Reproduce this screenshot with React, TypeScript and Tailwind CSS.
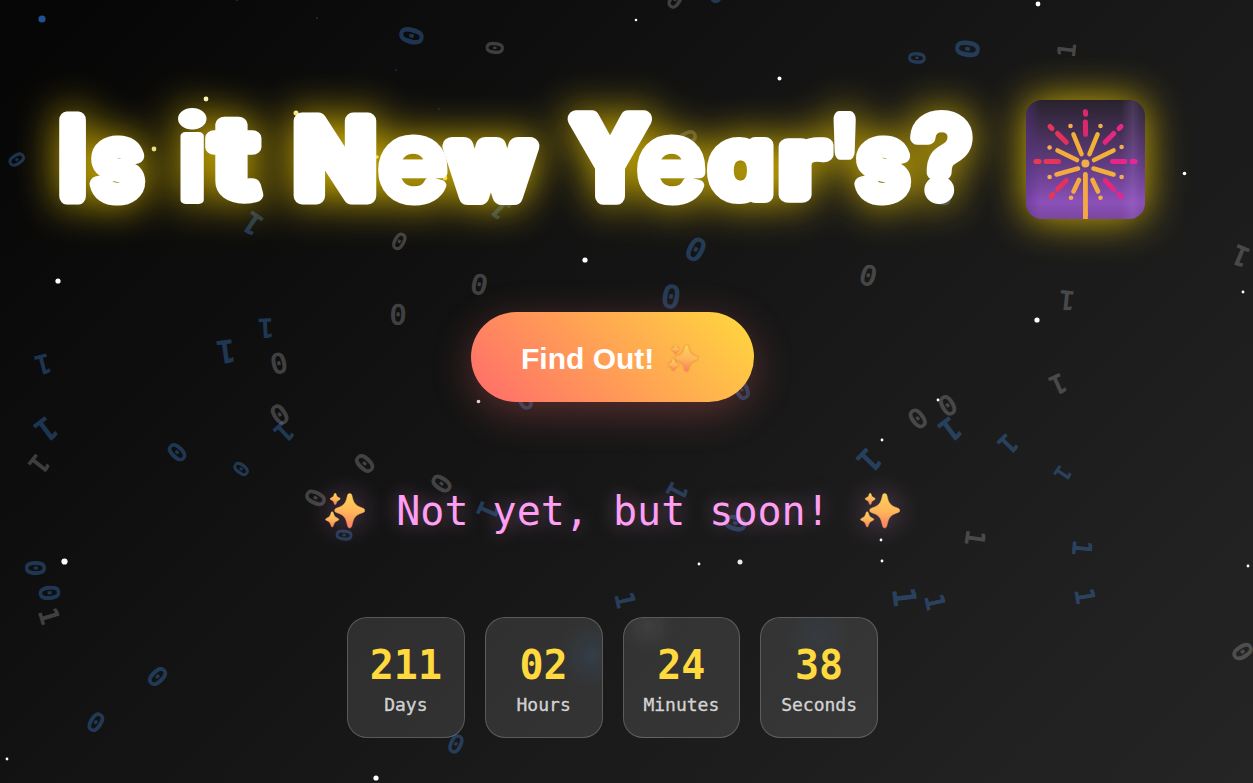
import React from "react";

type Digit = [ch: string, x: number, y: number, rot: number, size: number, tone: "b" | "g"];

const digits: Digit[] = [
  ["0", 412, 36, 105, 31, "b"], ["0", 494, 48, 95, 23, "g"], ["0", 675, 0, 30, 24, "g"], ["0", 717, -6, 20, 24, "b"],
  ["0", 916, 58, 94, 22, "b"], ["0", 968, 49, 98, 31, "b"], ["1", 1067, 50, -84, 25, "g"], ["0", 16, 160, 57, 22, "b"],
  ["1", 253, 223, 214, 30, "b"], ["1", 501, 208, 224, 28, "b"], ["0", 686, 139, 60, 27, "g"], ["0", 941, 199, 100, 22, "b"],
  ["0", 399, 242, 28, 23, "g"], ["0", 696, 249, 27, 31, "b"], ["0", 868, 276, 16, 27, "g"], ["0", 479, 285, 12, 27, "g"],
  ["0", 671, 296, 9, 31, "b"], ["0", 398, 315, 2, 27, "g"], ["1", 1241, 255, 203, 28, "g"], ["1", 1067, 300, 186, 27, "g"],
  ["1", 266, 328, 177, 27, "b"], ["1", 226, 351, 172, 32, "b"], ["1", 43, 364, 165, 27, "b"], ["0", 279, 364, -12, 27, "g"],
  ["0", 280, 415, -33, 27, "g"], ["1", 284, 432, 137, 27, "b"], ["1", 46, 429, 143, 32, "b"], ["1", 39, 464, 129, 27, "g"],
  ["0", 177, 452, -46, 26, "b"], ["0", 241, 469, -53, 21, "b"], ["0", 365, 464, -47, 27, "g"], ["0", 442, 484, -55, 27, "g"],
  ["0", 316, 498, -64, 27, "g"], ["0", 344, 535, 96, 21, "b"], ["1", 487, 510, 114, 28, "b"], ["1", 677, 491, 118, 27, "b"],
  ["0", 735, 523, 106, 29, "b"], ["0", 525, 400, -25, 27, "b"], ["0", 742, 390, -24, 27, "b"], ["1", 1058, 384, 156, 27, "g"],
  ["0", 918, 419, -37, 27, "g"], ["0", 948, 406, -30, 27, "g"], ["1", 950, 429, 143, 32, "b"], ["1", 869, 460, 134, 32, "b"],
  ["1", 1008, 444, 135, 27, "b"], ["1", 1062, 473, 124, 22, "b"], ["1", 975, 538, 98, 27, "g"], ["1", 1082, 548, 95, 27, "b"],
  ["1", 1085, 596, 81, 27, "b"], ["1", 904, 597, 83, 32, "b"], ["1", 935, 602, 78, 27, "b"], ["1", 625, 600, 77, 27, "b"],
  ["0", 35, 568, 90, 27, "b"], ["0", 49, 593, 84, 27, "b"], ["1", 49, 616, 73, 27, "g"], ["0", 157, 677, 46, 27, "b"],
  ["0", 96, 722, 31, 26, "b"], ["0", 456, 744, 25, 25, "b"], ["0", 1242, 652, 58, 27, "g"],
];

const stars: [x: number, y: number, r: number, fill?: string][] = [
  [42, 19, 3.6, "#1f5290"], [1038, 4, 2.4], [636, 20, 1.3], [779.5, 78.5, 2], [206, 99, 2.4, "#fff7cf"], [154, 149, 2.4, "#e5dcae"],
  [296, 113, 2.5, "#f7e8a8"], [377, 157, 1.8, "#ffe680"], [445, 178, 2.4, "#ffe680"], [1184.5, 173.5, 1.8], [585, 260, 2.6], [58, 281, 2.6],
  [1243, 292, 1.4], [1037, 320, 2.6], [478.5, 401.5, 1.8, "#e8dada"], [938, 400, 1.4], [882, 440, 1.4], [881, 540, 1.4],
  [882, 561, 1.4], [699, 564, 1.4], [740, 562, 2.5, "#eaeaea"], [64.5, 561.5, 3.1], [1248, 566, 1.4], [7, 759, 1.4], [376, 778, 2.6],
  [317, 18, 1, "#18304a"], [396, 70, 1, "#17304a"], [439, 109, 0.9, "#172b40"], [237, 0, 1, "#1b334a"],
];

function Backdrop() {
  return (
    <div className="pointer-events-none absolute inset-0 overflow-hidden" aria-hidden="true">
      <svg className="absolute inset-0 size-full">
        {stars.map(([x, y, r, fill]) => (
          <circle key={`${x}-${y}`} cx={x} cy={y} r={r} fill={fill ?? "#ffffff"} />
        ))}
      </svg>
      {digits.map(([ch, x, y, rot, size, tone], i) => (
        <span
          key={i}
          className={
            "absolute font-bold leading-none " +
            (ch === "0" ? "font-['Liberation_Mono',monospace] " : "font-['DejaVu_Sans_Mono',monospace] ") +
            (tone === "b" ? "text-[#4a9eff]/30" : "text-[#d0d0d0]/26")
          }
          style={{
            left: x,
            top: y,
            fontSize: size,
            transform:
              `translate(-50%,-50%) rotate(${rot}deg)` + (ch === "0" ? " translateY(0.08em) scale(1.08,1.17)" : ""),
          }}
        >
          {ch}
        </span>
      ))}
    </div>
  );
}

// Each letter is stretched to its own box: left, right, top, bottom, outline width, font weight.
type Glyph = [ch: string, left: number, right: number, top: number, bottom: number, outline: number, weight: number];
const words: Glyph[][] = [
  [["I", 58, 87, 112, 204, 16, 600], ["s", 89, 146, 135, 205, 15, 400]],
  [["i", 178, 207, 107, 204, 9, 400], ["t", 206, 263, 115, 204, 17, 500]],
  [["N", 293, 377, 112, 204, 17, 600], ["e", 378, 448, 135, 206, 11.5, 400], ["w", 442, 540, 136, 205, 19, 500]],
  [
    ["Y", 567, 653, 110, 204, 17, 600], ["e", 637, 706, 135, 206, 11.5, 400], ["a", 706, 768, 136, 205, 17, 400],
    ["r", 779, 833, 136, 204, 18, 500], ["'", 832, 857, 112, 159, 14, 600], ["s", 854, 912, 135, 205, 15, 400],
    ["?", 910, 973, 110, 204, 14.5, 400],
  ],
];
const ctx = document.createElement("canvas").getContext("2d")!;

function Letter({ glyph: [ch, left, right, top, bottom, outline, weight] }: { glyph: Glyph }) {
  ctx.font = `${weight} 105px Inter`;
  const m = ctx.measureText(ch);
  const sx = (right - left - outline) / (m.actualBoundingBoxRight + m.actualBoundingBoxLeft);
  const sy = (bottom - top - outline) / (m.actualBoundingBoxAscent + m.actualBoundingBoxDescent);
  const x = left + outline / 2 + m.actualBoundingBoxLeft * sx;
  const y = top + outline / 2 + m.actualBoundingBoxAscent * sy;
  return (
    <text
      transform={`translate(${x} ${y}) scale(${sx} ${sy})`}
      strokeWidth={outline}
      fontWeight={weight}
      className="[vector-effect:non-scaling-stroke]"
    >
      {ch}
    </text>
  );
}

function Title() {
  return (
    <h1 className="flex w-[1105px] items-center justify-between">
      <svg
        viewBox="40 80 950 150"
        className="h-[150px] w-[950px] overflow-visible font-['Inter',sans-serif] text-[105px] drop-shadow-[0_0_20px_rgba(255,215,0,0.82)] [font-feature-settings:'cv11']"
        fill="#fff"
        stroke="#fff"
        strokeLinejoin="round"
        strokeLinecap="round"
      >
        {words.map((word, i) => (
          <g key={i}>
            {word.map((glyph) => (
              <Letter key={glyph[1]} glyph={glyph} />
            ))}
          </g>
        ))}
      </svg>
      <Sparkler />
    </h1>
  );
}

function Sparkler() {
  return (
    <svg viewBox="0 0 119 119" className="mt-[9px] size-[119px] overflow-visible drop-shadow-[0_0_20px_rgba(255,215,0,0.82)]">
      <defs>
        <linearGradient id="night" x1="0" y1="0" x2="0" y2="1">
          <stop offset="0" stopColor="#28222d" />
          <stop offset="0.3" stopColor="#483159" />
          <stop offset="0.6" stopColor="#673f8b" />
          <stop offset="0.86" stopColor="#8b50b8" />
          <stop offset="1" stopColor="#7a479f" />
        </linearGradient>
        <linearGradient id="edge" x1="0" y1="0" x2="1" y2="0">
          <stop offset="0" stopColor="#56308a" stopOpacity="0.5" />
          <stop offset="0.12" stopColor="#56308a" stopOpacity="0" />
          <stop offset="0.8" stopColor="#b484df" stopOpacity="0" />
          <stop offset="0.9" stopColor="#b484df" stopOpacity="0.2" />
          <stop offset="1" stopColor="#70489a" stopOpacity="0.05" />
        </linearGradient>
        <linearGradient id="gold" gradientUnits="userSpaceOnUse" x1="30" y1="90" x2="90" y2="40">
          <stop offset="0" stopColor="#f6a546" />
          <stop offset="1" stopColor="#f0b52f" />
        </linearGradient>
        <linearGradient id="pink" gradientUnits="userSpaceOnUse" x1="8" y1="0" x2="111" y2="0">
          <stop offset="0" stopColor="#ee3b4f" />
          <stop offset="0.5" stopColor="#d9296a" />
          <stop offset="1" stopColor="#ee2498" />
        </linearGradient>
      </defs>
      <rect width="119" height="119" rx="16" fill="url(#night)" />
      <rect width="119" height="119" rx="16" fill="url(#edge)" />
      <g stroke="url(#pink)" strokeWidth="5" strokeLinecap="round">
        <path d="M59.4 11.8 59.6 14.2M59.4 22 59.6 34.4M10 61.4 13 61.6M20 61.4 32.5 61.6M86.5 61.4 99 61.6M106 61.4 109 61.6" />
        <path d="M24 26.5 26 28.5M31.5 33.5 40.3 42.3M93 28.5 95 26.5M79 42.3 87.8 33.5M25 96.5 27 94.5M31.5 89.3 40.3 80.5M93 94.5 95 96.5M79 80.5 87.8 89.3" />
      </g>
      <g stroke="url(#gold)" strokeWidth="4.6" strokeLinecap="round">
        <path d="M47.5 34.5 55.5 54M71.5 34.5 63.5 54M31.5 50.5 51 60M87.5 50.5 68 60M30.5 74.5 52 68.5M87.5 74.5 67.5 68.5M53 80 47.5 91.5M66.5 80 72 91.5" />
        <path d="M59.4 74.5 59.5 115" strokeWidth="4.8" />
      </g>
      <path d="M57.05 112h4.8v7h-4.8z" fill="#f6a546" />
      <g fill="#f2ad4d">
        <circle cx="59.4" cy="63.5" r="4" />
        {[[44.5, 26], [74.5, 26], [23.6, 47.5], [95.6, 47], [23.6, 77], [95.6, 77], [45, 97.7], [74.5, 97.7]].map(([x, y]) => (
          <circle key={`${x}-${y}`} cx={x} cy={y} r="2.3" />
        ))}
      </g>
    </svg>
  );
}

function Sparkles({ className }: { className: string }) {
  return (
    <svg viewBox="0 0 40 36" className={className}>
      <defs>
        <linearGradient id="spark" x1="0.4" y1="0" x2="0.3" y2="1">
          <stop offset="0" stopColor="#ffd05a" />
          <stop offset="0.5" stopColor="#ffb659" />
          <stop offset="1" stopColor="#fa7d62" />
        </linearGradient>
      </defs>
      <g fill="url(#spark)" stroke="url(#spark)" strokeWidth="0.5" strokeLinejoin="round">
        <path d="M24.7.5c1.200 0 1.900.7 2.200 1.900.9 3.700 1.500 6.700 3.700 8.900s4.800 3 7.500 4c1.200.5 1.600 1.200 1.600 2.100s-.4 1.600-1.600 2.100c-2.700 1-5.300 1.800-7.500 4s-2.800 5.500-3.700 9.300c-.3 1.200-1 2.200-2.200 2.200s-1.900-1-2.200-2.200c-.9-3.800-1.500-7.100-3.700-9.300s-4.800-3-7.500-4C10.100 19 9.700 18.300 9.700 17.400s.4-1.600 1.600-2.100c2.700-1 5.300-1.800 7.500-4s2.800-5.200 3.700-8.900c.3-1.200 1-1.900 2.200-1.900z" />
        <path d="M10.200.3c.6 0 .8.400 1 1 .5 2 .7 2.500 3 3.500.6.300 1 .5 1 1s-.4.800-1 1.100c-2.300 1.100-2.500 1.800-3 3.600-.2.700-.4 1-1 1s-.8-.3-1-1c-.5-2-.7-2.500-3-3.600-.6-.3-1-.6-1-1.100s.4-.7 1-1c2.300-1.100 2.500-1.600 3-3.500.2-.6.4-1 1-1z" />
        <path d="M7.200 18.800c.7 0 .9.500 1.100 1.200.8 2.800 1.500 3.900 4.300 5.200.7.3 1.200.6 1.200 1.200s-.5.900-1.200 1.200c-2.800 1.300-3.500 2.400-4.300 5.200-.2.700-.4 1.200-1.100 1.200s-.9-.5-1.100-1.200c-.8-2.800-1.500-3.900-4.300-5.200C1.100 27.300.6 27 .6 26.400s.5-.9 1.200-1.200c2.800-1.300 3.500-2.400 4.300-5.200.2-.7.4-1.200 1.100-1.200z" />
      </g>
    </svg>
  );
}

function CountCard({ value, label, glow }: { value: string; label: string; glow?: string }) {
  return (
    <div
      className={
        "flex h-[121px] flex-1 flex-col items-center rounded-[20px] border border-white/20 bg-white/11 pt-[23px] " +
        (glow ?? "")
      }
    >
      <div className="text-[40px] font-bold leading-[48px] text-[#ffd93d]">{value}</div>
      <div className="mt-1 text-[18px] leading-[24px] text-white/75 [-webkit-text-stroke:0.4px_rgba(255,255,255,0.6)]">{label}</div>
    </div>
  );
}

export default function App() {
  return (
    <div className="relative h-[783px] w-[1253px] overflow-hidden bg-[linear-gradient(135deg,#050505_0%,#161616_50%,#252525_100%)]">
      <Backdrop />
      <main className="relative flex w-[1225px] flex-col items-center font-['DejaVu_Sans_Mono',monospace]">
        <div className="flex w-full pl-10 pt-20">
          <Title />
        </div>
        <button className="mt-[82px] flex h-[90px] w-[283px] items-center rounded-full bg-[linear-gradient(45deg,#ff6b6b,#ffd93d)] pl-[50px] pt-0.5 font-['Liberation_Sans',sans-serif] text-[30px] font-bold text-white shadow-[0_10px_40px_rgba(255,107,107,0.3)]">
          <span>Find Out!</span>
          <Sparkles className="ml-[14px] h-[27px] w-[30px] drop-shadow-[0_0_1px_rgba(190,80,50,0.6)]" />
        </button>
        <p className="mt-[82px] flex h-[54px] items-center text-[40px] leading-[54px] text-[#ff9ff3] [text-shadow:0_0_20px_rgba(255,159,243,0.4)]">
          <Sparkles className="h-[36px] w-[40px] drop-shadow-[0_0_14px_rgba(255,159,243,0.4)]" />
          <span className="ml-[31px] mr-[30px] whitespace-pre">Not yet, but soon!</span>
          <Sparkles className="h-[36px] w-[40px] drop-shadow-[0_0_14px_rgba(255,159,243,0.4)]" />
        </p>
        <div className="mt-[79px] flex w-[531px] gap-5">
          <CountCard value="211" label="Days" />
          <CountCard
            value="02"
            label="Hours"
            glow="bg-[radial-gradient(circle_at_106px_37px,rgba(74,158,255,0.1),transparent_34px)]"
          />
          <CountCard
            value="24"
            label="Minutes"
            glow="bg-[radial-gradient(circle_at_24px_8px,rgba(210,210,210,0.08),transparent_28px)]"
          />
          <CountCard
            value="38"
            label="Seconds"
            glow="bg-[radial-gradient(circle_at_58px_18px,rgba(74,158,255,0.06),transparent_32px)]"
          />
        </div>
      </main>
    </div>
  );
}
